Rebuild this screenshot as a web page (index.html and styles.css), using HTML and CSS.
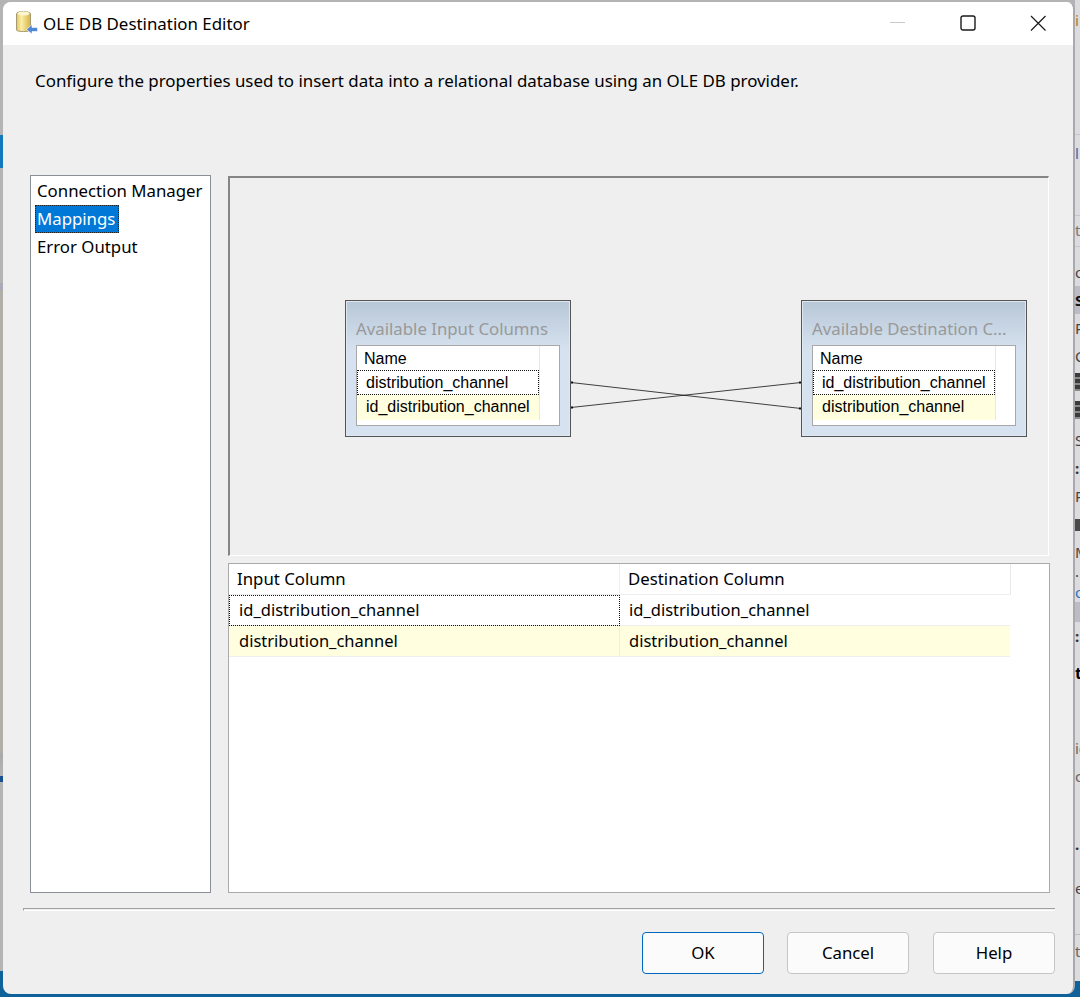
FILE: index.html
```html
<!DOCTYPE html>
<html>
<head>
    <meta charset="utf-8" />
    <title>OLE DB Destination Editor</title>
    <link rel="stylesheet" href="styles.css">
</head>
<body>
<div class="desk-left"></div>
<div class="window">
    <div class="titlebar">
        <svg class="app-icon" width="22" height="24" viewBox="0 0 22 24">
            <defs>
                <linearGradient id="can" x1="0" x2="1" y1="0" y2="0">
                    <stop offset="0" stop-color="#e3c65a"/>
                    <stop offset="0.35" stop-color="#fbeea8"/>
                    <stop offset="1" stop-color="#d8b444"/>
                </linearGradient>
            </defs>
            <path d="M0.5 3.5C0.5 1 14.5 1 14.500 3.500V20C14.500 22 0.5 22 0.5 20Z" fill="url(#can)" stroke="#a89a70"/>
            <ellipse cx="7.5" cy="3.5" rx="6" ry="2" fill="#fdf6cf"/>
            <path d="M10.500 19.500L16 14.500V17.500H21.500V21.500H16V24Z" fill="#4f86d6" stroke="#fff" stroke-width="0.6"/>
        </svg>
        <span class="title">OLE DB Destination Editor</span>
        <div class="controls">
            <svg width="16" height="16" viewBox="0 0 16 16"><path d="M0 7.5H15" stroke="#c9c9c9" fill="none"/></svg>
            <svg width="16" height="16" viewBox="0 0 16 16"><rect x="1" y="1" width="14" height="14" rx="2" stroke="#1a1a1a" stroke-width="1.4" fill="none"/></svg>
            <svg width="16" height="16" viewBox="0 0 16 16"><path d="M1 1L15.500 15.500M15.500 1L1 15.500" stroke="#1a1a1a" stroke-width="1.200" fill="none"/></svg>
        </div>
    </div>
    <div class="content">
        <p class="desc">Configure the properties used to insert data into a relational database using an OLE DB provider.</p>
        <div class="main">
            <div class="nav">
                <div class="nav-item"><span>Connection Manager</span></div>
                <div class="nav-item"><span class="selected">Mappings</span></div>
                <div class="nav-item"><span>Error Output</span></div>
            </div>
            <div class="panes">
                <div class="diagram">
                    <div class="card card-input">
                        <div class="card-title">Available Input Columns</div>
                        <div class="col-list">
                            <div class="col-inner">
                                <div class="col-head">Name</div>
                                <div class="col-row focus">distribution_channel</div>
                                <div class="col-row alt">id_distribution_channel</div>
                            </div>
                        </div>
                    </div>
                    <div class="card card-dest">
                        <div class="card-title">Available Destination C...</div>
                        <div class="col-list">
                            <div class="col-inner">
                                <div class="col-head">Name</div>
                                <div class="col-row focus">id_distribution_channel</div>
                                <div class="col-row alt">distribution_channel</div>
                            </div>
                        </div>
                    </div>
                    <svg class="links" width="800" height="300" viewBox="0 0 800 300">
                        <path d="M341 204.500L571 230.500M341 229.500L571 204.500" stroke="#111" stroke-width="0.8" fill="none"/>
                        <path d="M341 203.500h2v2h-2zM341 228.500h2v2h-2zM569 203.500h2v2h-2zM569 229.500h2v2h-2z" fill="#111"/>
                    </svg>
                </div>
                <div class="grid">
                    <div class="grid-row grid-head">
                        <div class="cell head-cell">Input Column</div>
                        <div class="cell head-cell">Destination Column</div>
                    </div>
                    <div class="grid-row">
                        <div class="cell focus">id_distribution_channel</div>
                        <div class="cell">id_distribution_channel</div>
                    </div>
                    <div class="grid-row alt">
                        <div class="cell">distribution_channel</div>
                        <div class="cell">distribution_channel</div>
                    </div>
                </div>
            </div>
        </div>
        <div class="separator"></div>
        <div class="buttons">
            <div class="btn btn-default">OK</div>
            <div class="btn">Cancel</div>
            <div class="btn btn-help">Help</div>
        </div>
    </div>
</div>
<div class="desk-right">
    <div class="sl sl-top">i</div>
    <div class="sl sl-gap"></div>
    <div class="sl sl-blue">l</div>
    <div class="sl sl-mid">ti</div>
    <div class="sl sl-gap2"></div>
    <div class="sl">or</div>
    <div class="sl sl-band"><b>S</b></div>
    <div class="sl">Pr</div>
    <div class="sl">Cl</div>
    <div class="sl"><i class="blob"></i></div>
    <div class="sl"><i class="blob"></i></div>
    <div class="sl">S</div>
    <div class="sl sl-dots">::</div>
    <div class="sl">P</div>
    <div class="sl"><i class="blob bar"></i></div>
    <div class="sl">M</div>
    <div class="sl sl-small">.</div>
    <div class="sl sl-link">ol</div>
    <div class="sl sl-band2"></div>
    <div class="sl sl-dots">::</div>
    <div class="sl sl-strong"><b>t</b></div>
    <div class="sl sl-space"></div>
    <div class="sl sl-soft">ic</div>
    <div class="sl sl-soft">c</div>
    <div class="sl sl-space2"></div>
    <div class="sl sl-dots">..</div>
    <div class="sl sl-space4"></div>
    <div class="sl">e</div>
    <div class="sl sl-space3"></div>
    <div class="sl sl-last">te</div>
    <div class="sl-blue-end"></div>
</div>
</body>
</html>
```

FILE: styles.css
```css
*{margin: 0;padding: 0;box-sizing: border-box;}
html,body{height: 997px;overflow: hidden;}
body{
    display: flex;
    font-family: "Noto Sans", "Open Sans", sans-serif;
    font-size: 16.8px;
    color: #000;
    background: linear-gradient(#b4b4b4 971px, #0f6199 971px);
}

/* what is left of the desktop around the dialog */
.desk-left{
    width: 3px;
    height: 971px;
    flex: none;
    background: linear-gradient(#b4b4b4 135px, #1378bd 135px, #1378bd 168px, #b4b4b4 168px, #b4b4b4 283px, #a9a9b8 283px, #a9a9b8 290px, #b0aea6 290px, #b0aea6 753px, #a9a9a9 753px, #b4b4b4 776px, #1a4f90 776px, #1a4f90 782px, #b4b4b4 782px);
}
.desk-right{
    width: 5px;
    flex: none;
    overflow: hidden;
    background: #dcdce0;
    font-size: 15px;
    color: #444;
}
.sl{height: 28px;line-height: 28px;white-space: nowrap;overflow: hidden;}
.sl-top{height: 28px;line-height: 40px;color: #a5793c;}
.sl-gap{height: 107px;border-bottom: 1px solid #c4c4d6;}
.sl-blue{height: 81px;line-height: 36px;color: #2b6cae;border-bottom: 1px solid #c4c4d6;}
.sl-mid{height: 31px;color: #777;border-bottom: 1px solid #c4c4d6;}
.sl-gap2{height: 11px;}
.sl-band{height: 28px;background: #bcbcc8;color: #111;}
.sl-dots{color: #333;font-weight: 700;}
.blob{
    display: block;
    width: 5px;
    height: 18px;
    margin-top: 3px;
    background: repeating-linear-gradient(#3c3c3c 0 4px, #8a8a8a 4px 6px);
}
.bar{height: 12px;margin-top: 9px;background: #4a4a4a;}
.sl-small{height: 14px;line-height: 10px;}
.sl-link{height: 22px;line-height: 24px;color: #2276c0;}
.sl-band2{height: 20px;background: #bcbcc8;}
.sl-strong{height: 46px;line-height: 46px;color: #000;font-size: 16px;}
.sl-space{height: 38px;}
.sl-soft{color: #666;}
.sl-space2{height: 40px;}
.sl-space4{height: 16px;}
.sl-space3{height: 33px;border-bottom: 1px solid #bcbcc8;}
.sl-last{height: 46px;line-height: 32px;color: #666;}
.sl-blue-end{height: 20px;background: #0f6199;}

.window{
    width: 1072px;
    height: 992px;
    flex: none;
    margin-top: 2px;
    background: #efefef;
    border-right: 2px solid #a9a9ae;
    border-radius: 8px;
    overflow: hidden;
    display: flex;
    flex-direction: column;
}
.titlebar{
    height: 43px;
    flex: none;
    background: #fff;
    display: flex;
    align-items: center;
    padding-left: 13px;
}
.app-icon{margin-top: -3px;flex: none;}
.title{margin-left: 5px;font-size: 16.9px;}
.controls{
    margin-left: auto;
    margin-top: -2px;
    padding-right: 27px;
    display: flex;
    gap: 54px;
}
.content{flex: 1;display: flex;flex-direction: column;}
.desc{
    margin-top: 25px;
    margin-left: 32px;
    height: 105px;
    line-height: 22px;
    font-size: 16.9px;
}
.main{
    height: 718px;
    margin-left: 27px;
    display: flex;
    gap: 17px;
}
.nav{
    width: 181px;
    background: #fff;
    border: 1px solid #8a8f98;
    padding: 1px 0 0 4px;
}
.nav-item{height: 28px;line-height: 28px;}
.nav-item span{display: inline-block;height: 28px;padding: 0 2px;line-height: 27px;}
.nav-item .selected{
    padding: 0 1px;
    width: 84px;
    background: #0078d7;
    color: #fff;
    border: 1px dotted #222;
    line-height: 25px;
}
.panes{
    width: 822px;
    display: flex;
    flex-direction: column;
    gap: 7px;
    padding-top: 1px;
}

/* mapping diagram */
.diagram{
    width: 821px;
    height: 380px;
    position: relative;
    border-style: solid;
    border-width: 2px 1px 1px 2px;
    border-color: #858585 #fff #fff #858585;
}
.card{
    position: absolute;
    top: 122px;
    width: 226px;
    height: 137px;
    border: 1px solid #555;
    box-shadow: inset 0 0 0 1px #dfe7f1;
    background: linear-gradient(#b9c8d7 2px, #d6e2f0 50px);
    padding: 16px 10px 0 10px;
}
.card-input{left: 115px;}
.card-dest{left: 571px;}
.card-title{
    height: 28px;
    line-height: 24px;
    color: #999;
    white-space: nowrap;
}
.col-list{
    width: 204px;
    height: 81px;
    background: #fff;
    border: 1px solid #a8a8a8;
    font-family: "Liberation Sans", Arial, sans-serif;
    font-size: 16px;
}
.col-inner{width: 183px;height: 74px;border-right: 1px solid #e8e8e8;border-bottom: 1px solid #eee;}
.col-head{height: 24px;line-height: 25px;padding-left: 7px;}
.col-row{height: 25px;line-height: 23px;padding-left: 8px;white-space: nowrap;}
.col-row.alt{background: #ffffe0;line-height: 24px;padding-left: 9px;}
.focus{border: 1px dotted #111;}
.links{position: absolute;left: 0;top: 0;}

/* mapping grid */
.grid{
    height: 330px;
    background: #fff;
    border: 1px solid #aaa;
}
.grid-row{
    width: 781px;
    height: 31px;
    display: flex;
    border-bottom: 1px solid #eee;
    font-size: 16.5px;
}
.grid-head{width: 782px;font-size: 16.8px;}
.grid-row.alt{background: #ffffe0;}
.cell{
    width: 391px;
    line-height: 30px;
    padding-left: 10px;
    border-right: 1px solid #eee;
    white-space: nowrap;
}
.cell + .cell{width: 390px;padding-left: 9px;border-right: 0;}
.head-cell{padding-left: 8px;}
.cell + .head-cell{width: 391px;padding-left: 8px;border-right: 1px solid #e8e8e8;}
.cell.focus{border: 1px dotted #111;line-height: 28px;padding-left: 9px;margin-bottom: -1px;}

.separator{
    margin: 15px 0 0 20px;
    width: 1032px;
    height: 3px;
    border-top: 1px solid #a0a0a0;
    border-left: 1px solid #a0a0a0;
    border-bottom: 1px solid #fff;
}
.buttons{
    margin-top: 21px;
    padding-right: 18px;
    display: flex;
    justify-content: flex-end;
    gap: 23px;
}
.btn{
    width: 122px;
    height: 42px;
    line-height: 40px;
    text-align: center;
    background: #fbfbfb;
    border: 1px solid #c6c6c6;
    border-radius: 4px;
}
.btn-default{border-color: #0067c0;}
.btn-help{margin-left: 1px;}
```
